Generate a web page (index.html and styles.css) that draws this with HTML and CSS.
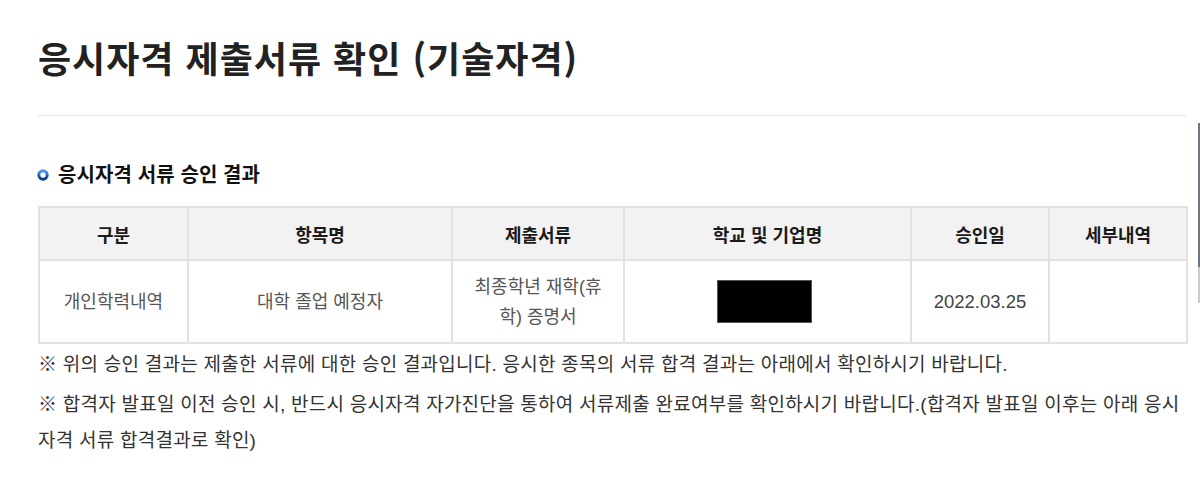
FILE: index.html
```html
<!DOCTYPE html>
<html lang="ko">
<head>
<meta charset="utf-8">
<title>응시자격 제출서류 확인 (기술자격)</title>
<link rel="stylesheet" href="styles.css">
</head>
<body>
<div class="page">
  <h1 class="page-title">응시자격 제출서류 확인 (기술자격)</h1>
  <div class="divider"></div>
  <h2 class="section-title">
    <svg class="bullet" width="12" height="12" viewBox="0 0 12 12" aria-hidden="true">
      <defs>
        <linearGradient id="bg" x1="0" y1="0" x2="0" y2="1">
          <stop offset="0" stop-color="#4a98ea"/>
          <stop offset="1" stop-color="#083a86"/>
        </linearGradient>
      </defs>
      <circle cx="6" cy="6" r="4.2" fill="#fff" stroke="url(#bg)" stroke-width="3"/>
    </svg>
    <span>응시자격 서류 승인 결과</span>
  </h2>
  <table class="result-table">
    <colgroup>
      <col class="c1"><col class="c2"><col class="c3"><col class="c4"><col class="c5"><col class="c6">
    </colgroup>
    <thead>
      <tr>
        <th>구분</th>
        <th>항목명</th>
        <th>제출서류</th>
        <th>학교 및 기업명</th>
        <th>승인일</th>
        <th>세부내역</th>
      </tr>
    </thead>
    <tbody>
      <tr>
        <td>개인학력내역</td>
        <td>대학 졸업 예정자</td>
        <td class="wrap">최종학년 재학(휴학) 증명서</td>
        <td><span class="redacted"></span></td>
        <td class="date">2022.03.25</td>
        <td></td>
      </tr>
    </tbody>
  </table>
  <div class="notes">
    <p>※ 위의 승인 결과는 제출한 서류에 대한 승인 결과입니다. 응시한 종목의 서류 합격 결과는 아래에서 확인하시기 바랍니다.</p>
    <p>※ 합격자 발표일 이전 승인 시, 반드시 응시자격 자가진단을 통하여 서류제출 완료여부를 확인하시기 바랍니다.(합격자 발표일 이후는 아래 응시자격 서류 합격결과로 확인)</p>
  </div>
</div>
<div class="scroll-indicator"></div>
</body>
</html>
```

FILE: styles.css
```css
html, body {
  margin: 0;
  padding: 0;
  background: #fff;
}
body {
  font-family: "Liberation Sans", "Noto Sans CJK KR", sans-serif;
  color: #222;
  overflow: hidden;
}
.page {
  width: 1148px;
  padding: 0 0 0 38px;
}
.page-title {
  margin: 0;
  padding-top: 35px;
  font-family: "Noto Sans CJK KR", sans-serif;
  font-size: 36px;
  line-height: 44px;
  font-weight: 700;
  color: #222;
  letter-spacing: 1px;
}
.divider {
  margin-top: 36px;
  height: 1px;
  background: #e6e6e6;
}
.section-title {
  margin: 46px 0 0 0;
  display: flex;
  align-items: center;
  gap: 9px;
  font-family: "Noto Sans CJK KR", sans-serif;
  font-size: 20px;
  line-height: 24px;
  font-weight: 700;
  color: #111;
  letter-spacing: 0.1px;
}
.bullet {
  display: block;
  margin-left: -1px;
  margin-top: 2px;
}
.result-table {
  margin-top: 20px;
  width: 1148px;
  border-collapse: collapse;
  table-layout: fixed;
  border: 2px solid #e2e2e2;
}
.c1 { width: 149px; }
.c2 { width: 264px; }
.c3 { width: 172px; }
.c4 { width: 287px; }
.c5 { width: 138px; }
.c6 { width: 138px; }
.result-table th,
.result-table td {
  border: 2px solid #e2e2e2;
  text-align: center;
  vertical-align: middle;
}
.result-table th {
  height: 51px;
  padding: 0;
  background: #f2f2f2;
  font-family: "Noto Sans CJK KR", sans-serif;
  font-size: 18px;
  font-weight: 700;
  color: #1a1a1a;
  letter-spacing: 0;
}
.result-table td {
  height: 81px;
  padding: 0 20px;
  font-size: 18px;
  line-height: 30px;
  color: #555;
}
.result-table td.date {
  font-size: 18.5px;
  color: #444;
}
.redacted {
  display: inline-block;
  width: 93px;
  height: 41px;
  background: #000;
  border: 1.5px solid #555;
  vertical-align: middle;
  margin-right: 7px;
}
.notes {
  margin-top: 3px;
  font-size: 19px;
  letter-spacing: 0.25px;
  color: #333;
}
.notes p {
  margin: 0;
  line-height: 36px;
}
.notes p + p {
  margin-top: 4px;
}
.scroll-indicator {
  position: absolute;
  left: 1198px;
  top: 123px;
  width: 2px;
  height: 180px;
  background: linear-gradient(to bottom, #6b7684 0, #6b7684 80%, #c8ccd2 80%, #c8ccd2 100%);
}
```
